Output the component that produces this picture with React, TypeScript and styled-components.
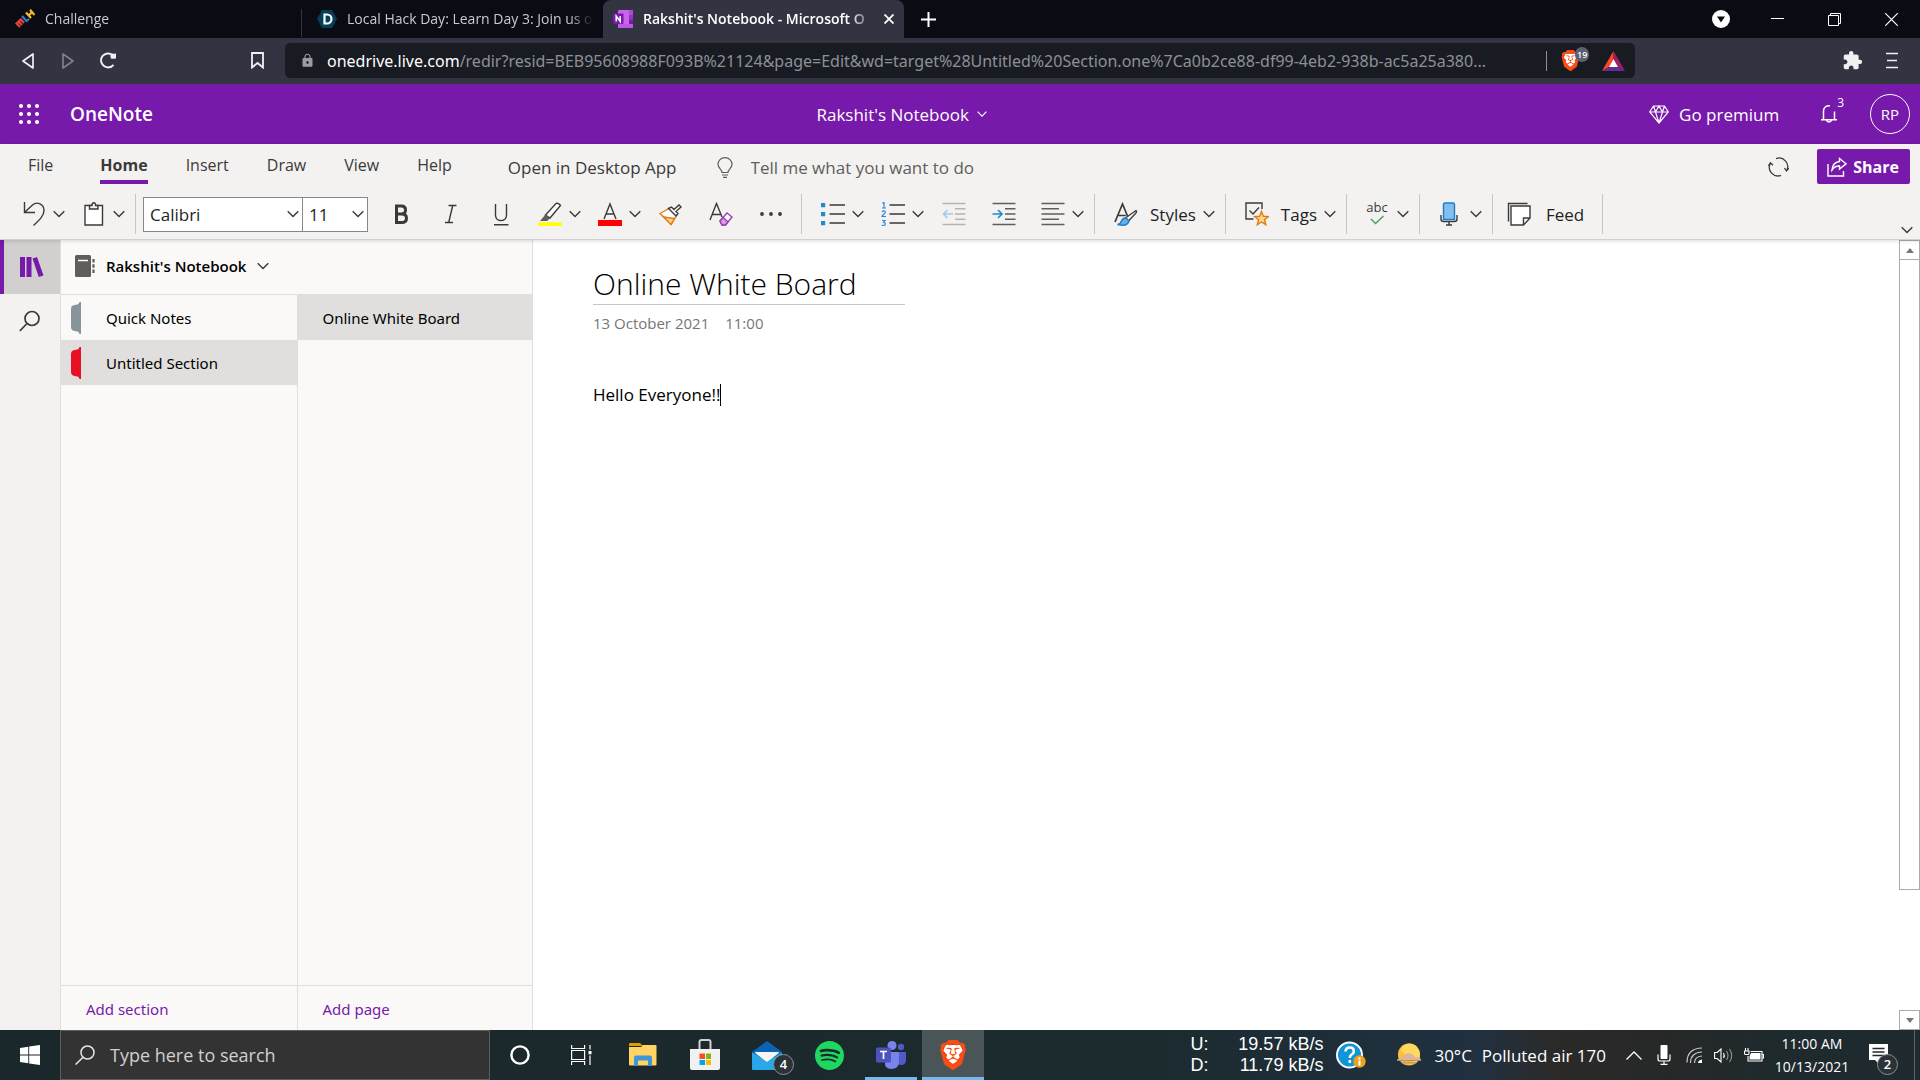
import React from "react";
import styled, { createGlobalStyle, css } from "styled-components";
import { MdExtension, MdLock } from "react-icons/md";
import { SiBrave, SiSpotify } from "react-icons/si";

const ui = `"Open Sans", "Noto Sans", sans-serif`;
const purple = "#7719aa";
const ink = "#3b3a39";

const GlobalStyle = createGlobalStyle`
  *, *::before, *::after { box-sizing: border-box; }
  html, body { margin: 0; }
  body { font-family: ${ui}; font-size: 17px; color: #201f1e; background: #fff; }
  button, input, select { font: inherit; color: inherit; margin: 0; padding: 0; border: 0; background: none; border-radius: 0; }
  button { cursor: pointer; white-space: nowrap; }
  input:focus, [contenteditable]:focus { outline: none; }
  svg { display: block; flex: none; }
  h1, h2, p { margin: 0; font-weight: 400; }
`;

const Page = styled.div`
  display: flex;
  flex-direction: column;
  min-height: 100vh;
`;

/* ---------- browser window ---------- */

const TabStrip = styled.div`
  display: flex;
  height: 38px;
  background: #0b0b14;
  color: #c9cacf;
`;

const BrowserTab = styled.div<{ $active?: boolean }>`
  display: flex;
  align-items: center;
  gap: 10px;
  width: 301px;
  padding: 0 10px 1px;
  font-size: 14px;
  ${(p) =>
    p.$active
      ? css`
          background: #323442;
          color: #fff;
          font-weight: 600;
          border-radius: 8px 8px 0 0;
        `
      : css`
          padding-left: 15px;
        `}
`;

const TabDivider = styled.div`
  width: 1px;
  height: 28px;
  margin-top: 9px;
  background: #33343d;
`;

const TabLabel = styled.span`
  flex: 1;
  min-width: 0;
  white-space: nowrap;
  mask-image: linear-gradient(90deg, #000 calc(100% - 24px), transparent);
`;

const NewTab = styled.button`
  display: grid;
  place-items: center;
  width: 48px;
  color: #fff;
`;

const WindowButtons = styled.div`
  display: flex;
  margin-left: auto;
`;

const WindowButton = styled.button`
  display: grid;
  place-items: center;
  width: 57px;
  color: #fff;
`;

const AddressRow = styled.div`
  display: flex;
  align-items: center;
  height: 46px;
  padding: 0 8px 1px;
  background: #323442;
  color: #f1f1f3;
`;

const NavButton = styled.button<{ $dim?: boolean }>`
  display: grid;
  place-items: center;
  width: 40px;
  height: 34px;
  opacity: ${(p) => (p.$dim ? 0.4 : 1)};
`;

const BookmarkButton = styled(NavButton)`
  margin: 0 8px 0 109px;
`;

const UrlBox = styled.div`
  display: flex;
  align-items: center;
  flex: 1;
  min-width: 0;
  max-width: 1350px;
  height: 35px;
  padding: 0 10px 0 15px;
  border-radius: 5px;
  background: #191b22;
  color: #8d9098;
`;

const Url = styled.div`
  flex: 1;
  min-width: 0;
  margin-left: 12px;
  overflow: hidden;
  white-space: nowrap;
  font-family: "Noto Sans", sans-serif;
  font-size: 16px;
  line-height: 24px;
  b {
    color: #fff;
    font-weight: 400;
  }
`;

const UrlRule = styled.span`
  width: 1px;
  height: 20px;
  margin: 0 13px 0 8px;
  background: #8d9098;
`;

const Shield = styled.button`
  position: relative;
  display: grid;
  width: 30px;
  margin-right: 12px;
`;

const ShieldCount = styled.span`
  position: absolute;
  left: 15px;
  top: -3px;
  padding: 0 2px;
  border-radius: 8px;
  background: #5d6070;
  color: #fff;
  font-size: 9px;
  font-weight: 600;
  line-height: 15px;
`;

const BrowserTools = styled.div`
  display: flex;
  margin-left: auto;
`;

/* ---------- OneNote header ---------- */

const AppHeader = styled.header`
  display: grid;
  grid-template-columns: minmax(0, 7fr) auto minmax(0, 8fr);
  align-items: center;
  height: 60px;
  background: ${purple};
  color: #fff;
`;

const HeaderSide = styled.div<{ $end?: boolean }>`
  display: flex;
  align-items: center;
  justify-content: ${(p) => (p.$end ? "flex-end" : "flex-start")};
  padding: 0 10px 0 18px;
`;

const Brand = styled.span`
  margin-left: 30px;
  font-size: 19px;
  font-weight: 600;
`;

const HeaderButton = styled.button`
  display: flex;
  align-items: center;
  gap: 8px;
`;

const Premium = styled(HeaderButton)`
  gap: 10px;
  margin-right: 42px;
`;

const Bell = styled(HeaderButton)`
  align-items: flex-start;
  gap: 0;
  margin-right: 26px;
  padding-bottom: 8px;
  font-size: 12px;
  line-height: 10px;
  svg {
    margin-top: 7px;
  }
`;

const Avatar = styled.button`
  width: 40px;
  height: 40px;
  border: 1px solid #fff;
  border-radius: 50%;
  font-size: 15px;
`;

/* ---------- ribbon ---------- */

const Ribbon = styled.div`
  position: relative;
  background: #f3f2f1;
  border-bottom: 1px solid #d2d0ce;
  box-shadow: 0 1px 4px rgba(0, 0, 0, 0.14);
`;

const MenuRow = styled.div`
  display: flex;
  height: 40px;
  padding: 0 10px 0 9px;
  color: ${ink};
`;

const MenuTab = styled.button<{ $current?: boolean }>`
  padding: 5px 19px 0;
  font-size: 16px;
  &:first-child {
    margin-right: 9px;
  }
  span {
    display: block;
    height: 34px;
    line-height: 30px;
    border-bottom: 4px solid ${(p) => (p.$current ? purple : "transparent")};
    font-weight: ${(p) => (p.$current ? 700 : 400)};
  }
`;

const OpenDesktop = styled.button`
  margin: 7px 40px 0 37px;
`;

const TellMe = styled.label`
  display: flex;
  align-items: center;
  gap: 18px;
  margin-top: 7px;
  input {
    width: 320px;
  }
  input::placeholder {
    color: #605e5c;
    opacity: 1;
  }
`;

const MenuEnd = styled.div`
  display: flex;
  align-items: center;
  gap: 28px;
  margin: 5px 0 0 auto;
`;

const ShareButton = styled.button`
  display: flex;
  align-items: center;
  gap: 6px;
  height: 35px;
  padding: 0 11px 0 10px;
  border-radius: 2px;
  background: ${purple};
  color: #fff;
  font-size: 16px;
  font-weight: 700;
`;

const ToolRow = styled.div`
  display: flex;
  align-items: center;
  height: 55px;
  padding: 5px 7px 0 3px;
`;

const ToolGroup = styled.div`
  display: flex;
  align-items: center;
  height: 40px;
  padding: 0 5px 0 7px;
  border-right: 1px solid #c8c6c4;
`;

const Tool = styled.button`
  display: flex;
  align-items: center;
  justify-content: center;
  width: 50px;
  height: 40px;
`;

const DropTool = styled.button`
  display: flex;
  align-items: center;
  gap: 7px;
  height: 40px;
  padding: 0 5px 0 12px;
`;

const ToolLabel = styled.span`
  margin-left: 5px;
`;

const FeedTool = styled(DropTool)`
  gap: 10px;
  padding: 0 13px 0 7px;
`;

const SelectBox = styled.label<{ $width: number }>`
  display: grid;
  align-items: center;
  width: ${(p) => p.$width}px;
  height: 35px;
  border: 1px solid #8a8886;
  background: #fff;
  & + & {
    border-left: 0;
    margin-right: 8px;
  }
  select,
  svg {
    grid-area: 1 / 1;
  }
  select {
    appearance: none;
    width: 100%;
    height: 33px;
    padding-left: 6px;
  }
  svg {
    justify-self: end;
    margin-right: 3px;
    pointer-events: none;
  }
`;

const CollapseRibbon = styled.button`
  align-self: flex-end;
  margin: 0 0 5px auto;
`;

/* ---------- workspace ---------- */

const Workspace = styled.main`
  display: flex;
  flex: 1;
`;

const Rail = styled.nav`
  display: flex;
  flex-direction: column;
  width: 61px;
  background: #f3f2f1;
  border-right: 1px solid #e1dfdd;
`;

const RailButton = styled.button<{ $current?: boolean }>`
  display: grid;
  place-items: center;
  height: 54px;
  border-left: ${(p) => (p.$current ? `4px solid ${purple}` : "0")};
  background: ${(p) => (p.$current ? "#d2d0ce" : "transparent")};
`;

const Navigator = styled.aside`
  display: flex;
  flex-direction: column;
  width: 472px;
  background: #faf9f8;
  border-right: 1px solid #e1dfdd;
  font-family: "Noto Sans", sans-serif;
  font-size: 15px;
  color: #000;
`;

const NotebookButton = styled.button`
  display: flex;
  align-items: center;
  gap: 11px;
  height: 54px;
  padding: 0 0 2px 14px;
  font-family: ${ui};
  font-weight: 600;
`;

const Columns = styled.div`
  display: grid;
  grid-template-columns: 1fr 1fr;
  flex: 1;
`;

const Column = styled.div`
  display: flex;
  flex-direction: column;
  & + & {
    border-left: 1px solid #e1dfdd;
  }
`;

const Entry = styled.button<{ $selected?: boolean; $inset?: boolean }>`
  display: flex;
  align-items: center;
  gap: 25px;
  height: 45px;
  padding-left: ${(p) => (p.$inset ? 25 : 10)}px;
  background: ${(p) => (p.$selected ? "#e1dfdd" : "transparent")};
`;

const EntryList = styled.div`
  display: flex;
  flex-direction: column;
  flex: 1;
  border-top: 1px solid #e1dfdd;
`;

const AddButton = styled.button`
  height: 45px;
  padding: 2px 0 0 25px;
  border-top: 1px solid #e1dfdd;
  color: ${purple};
  text-align: left;
`;

const Canvas = styled.article`
  flex: 1;
  min-width: 0;
  padding: 22px 60px;
`;

const NoteTitle = styled.h1`
  width: 312px;
  height: 43px;
  border-bottom: 1px solid #c8c6c4;
  font-size: 30px;
  font-weight: 300;
  line-height: 44px;
  color: #000;
  white-space: nowrap;
`;

const NoteMeta = styled.p`
  display: flex;
  gap: 16px;
  margin-top: 6px;
  font-size: 15px;
  line-height: 24px;
  color: #767676;
`;

const NoteBody = styled.p`
  display: flex;
  align-items: center;
  margin-top: 48px;
  line-height: 24px;
  color: #000;
`;

const Caret = styled.span`
  width: 1px;
  height: 22px;
  background: #000;
`;

const ScrollTrack = styled.div`
  display: flex;
  flex-direction: column;
  width: 21px;
`;

const ScrollButton = styled.button`
  display: grid;
  place-items: center;
  height: 20px;
  border: 1px solid #ababab;
`;

const ScrollRun = styled.div`
  flex: 1;
`;

const ScrollThumb = styled.div`
  height: 84%;
  border: 1px solid #ababab;
  border-top: 0;
`;

/* ---------- Windows taskbar ---------- */

const Taskbar = styled.footer`
  display: flex;
  height: 50px;
  background: linear-gradient(90deg, #1a272b 0%, #1c2b2e 60%, #1e2e3a 70%, #21303f 77%, #2b2a29 81%, #262828 87%, #1e2a2d 93%, #1e2a2d 100%);
  color: #fff;
`;

const TaskButton = styled.button<{ $width: number; $state?: "running" | "focused" }>`
  position: relative;
  display: grid;
  place-items: center;
  width: ${(p) => p.$width}px;
  height: 50px;
  background: ${(p) => (p.$state === "focused" ? "#4a5557" : "transparent")};
  &::after {
    content: "";
    position: absolute;
    bottom: 0;
    left: ${(p) => (p.$state === "focused" ? 0 : 5)}px;
    right: ${(p) => (p.$state === "focused" ? 0 : 5)}px;
    height: 3px;
    background: ${(p) => (p.$state ? "#76b9ed" : "transparent")};
  }
`;

const SearchBox = styled.label`
  display: flex;
  align-items: center;
  gap: 15px;
  width: 430px;
  padding-left: 14px;
  border: 1px solid #5b5d5e;
  background: #333;
  font-size: 18px;
  input {
    flex: 1;
    min-width: 0;
  }
  input::placeholder {
    color: #d0d0d0;
    opacity: 1;
  }
`;

const CountBadge = styled.span`
  position: absolute;
  right: 4px;
  bottom: 5px;
  width: 21px;
  height: 21px;
  border: 1px solid #8b8f90;
  border-radius: 50%;
  background: #2b3336;
  font-size: 13px;
  font-weight: 600;
  line-height: 19px;
  text-align: center;
`;

const Tray = styled.div`
  display: flex;
  align-items: center;
  margin-left: auto;
`;

const NetMeter = styled.div`
  display: grid;
  grid-template-columns: auto auto;
  justify-content: space-between;
  width: 133px;
  margin-right: 13px;
  font-family: "Liberation Sans", Arial, sans-serif;
  font-size: 18px;
  line-height: 21px;
  span:nth-child(even) {
    text-align: right;
  }
`;

const Weather = styled.button`
  display: flex;
  align-items: center;
  gap: 12px;
  margin-left: 30px;
  padding-right: 13px;
`;

const WeatherText = styled.span`
  display: flex;
  gap: 10px;
`;

const TrayButton = styled.button`
  display: grid;
  place-items: center;
  width: 30px;
  height: 50px;
`;

const Clock = styled.button`
  width: 86px;
  font-size: 14px;
  line-height: 23px;
  text-align: center;
  span {
    display: block;
  }
`;

const DesktopEdge = styled.div`
  width: 6px;
  height: 50px;
  margin-left: 12px;
  border-left: 1px solid #5b6466;
`;

/* ---------- drawings ---------- */

const Chevron = ({ color = ink, width = 12 }: { color?: string; width?: number }) => (
  <svg width={width} height="8" viewBox="0 0 12 8" fill="none" stroke={color} strokeWidth="1.4">
    <path d="M.7 1.2 6 6.5l5.300-5.300" />
  </svg>
);

const Glyph = ({ children, size = 24, color = ink }: { children: React.ReactNode; size?: number; color?: string }) => (
  <svg width={size} height={size} viewBox="0 0 24 24" fill="none" stroke={color} strokeWidth="1.4">
    {children}
  </svg>
);

const MlhLogo = () => (
  <svg width="20" height="20" viewBox="0 0 20 20" fill="none" strokeWidth="2.200">
    <path d="M5 18 1.500 14.500l2-2 3.500 3.500M4 12l2-1.500 3 3.500" stroke="#e5443a" />
    <path d="M7 7l4.500 5 2.500-2" stroke="#2f7fd0" />
    <path d="M11 3.500 16 9M15 .8 19.500 6M13.500 6.500 17 3.200" stroke="#f6c02d" />
  </svg>
);

const DevpostLogo = () => (
  <svg width="20" height="20" viewBox="0 0 20 20">
    <path d="M5 1h10l5 9-5 9H5L0 10z" fill="#053f56" />
    <path d="M7.500 5.500H10a4.500 4.500 0 0 1 0 9H7.500z" fill="none" stroke="#fff" strokeWidth="2.200" />
  </svg>
);

const OneNoteLogo = () => (
  <svg width="20" height="20" viewBox="0 0 20 20">
    <rect x="5" y="1" width="15" height="18" rx="1" fill="#ca64ea" />
    <path d="M16 1h3a1 1 0 0 1 1 1v4h-4z" fill="#ae4bd5" />
    <path d="M16 6h4v4.500h-4z" fill="#9332bf" />
    <path d="M16 10.500h4V15h-4z" fill="#7719aa" />
    <path d="M5 15h15v3a1 1 0 0 1-1 1H6a1 1 0 0 1-1-1z" fill="#c057e3" />
    <rect x="0" y="4.500" width="10.500" height="10.500" rx="1" fill="#7719aa" />
    <path d="M3.200 12.500v-5.500l4 5.500V7" fill="none" stroke="#fff" strokeWidth="1.500" />
  </svg>
);

const BraveShield = ({ size }: { size: number }) => (
  <svg width={size} height={size} viewBox="0 0 24 24">
    <path d="M6 4h12l2 5-3.500 9-4.500 4-4.500-4L4 9z" fill="#fff" />
    <SiBrave size={24} color="#fb4b14" />
  </svg>
);

const BatTriangle = () => (
  <svg width="23" height="20" viewBox="0 0 23 20">
    <path d="M11.500 0 0 20l7-4 4.500-8z" fill="#ff4724" />
    <path d="M11.500 0 23 20l-7-4-4.500-8z" fill="#9e1f63" />
    <path d="M0 20h23l-7-4H7z" fill="#662d91" />
    <path d="M11.500 8 7 16h9z" fill="#fff" />
  </svg>
);

const Waffle = () => (
  <svg width="22" height="22" viewBox="0 0 22 22" fill="#fff">
    {[3, 11, 19].map((y) => [3, 11, 19].map((x) => <circle key={`${x}-${y}`} cx={x} cy={y} r="2.100" />))}
  </svg>
);

const BrushIcon = () => (
  <Glyph>
    <path d="M1 11.500 11 6l7 6.500-5.500 9.500z" fill="#fff" stroke="#e07b1a" />
    <path d="M4.500 15l11 1.500-3.500 6z" fill="#fbd08b" stroke="#e07b1a" />
    <path d="M9.500 6.500l3-1.500 2.500 2.500 5-4.500 2 2-5 4.500 2 2-2 2.500z" fill="#fff" />
  </Glyph>
);

const StarIcon = () => (
  <Glyph>
    <path d="M8.500 17H1V1h16v6" fill="none" />
    <path d="M4.500 8.500 8 12l6-6.500" />
    <path d="m16.500 9.500 1.900 4.800 5 .3-3.900 3.200 1.300 4.900-4.300-2.700-4.200 2.700 1.300-4.900-3.900-3.200 5-.3z" fill="#fcd78b" stroke="#e07b1a" />
  </Glyph>
);

const ListLines = ({ numbered }: { numbered?: boolean }) => (
  <Glyph>
    <path d="M8.500 3H24M8.500 12H24M8.500 21H24" />
    {numbered ? (
      <g stroke="#2b88d8" strokeWidth="1.200">
        <path d="M1.300 1.200 3 .4V6M1 6h4" />
        <path d="M1 10c.5-1.500 3.500-1.500 3.300.3C4.200 12 1 13 1 14.500h4" />
        <path d="M1 18.500h3l-1.500 2c2.500 0 2.500 3 0 3-.8 0-1.300-.3-1.700-.7" />
      </g>
    ) : (
      <path d="M0 1h4.200v4.200H0zM0 10h4.200v4.200H0zM0 19h4.200v4.200H0z" fill="#1e8bcd" stroke="none" />
    )}
  </Glyph>
);

const IndentIcon = ({ outward }: { outward?: boolean }) => (
  <Glyph color={outward ? "#b6b4b2" : "#605e5c"}>
    <path d="M.5 1.500h23M13 6.700h10.500M13 12h10.500M13 17.200h10.500M.5 22.500h23" />
    <path
      d={outward ? "M11 12H1.500M5.500 8l-4 4 4 4" : "M.5 12H10M6 8l4 4-4 4"}
      stroke={outward ? "#9dcbec" : "#1e8bcd"}
      strokeWidth="1.700"
    />
  </Glyph>
);

const NotebookIcon = () => (
  <svg width="20" height="22" viewBox="0 0 20 22">
    <path d="M0 1.500A1.500 1.500 0 0 1 1.500 0h13A1.500 1.500 0 0 1 16 1.500v19a1.500 1.500 0 0 1-1.500 1.500h-13A1.500 1.500 0 0 1 0 20.500z" fill="#605e5c" />
    <path d="M3 5.500h10" stroke="#fff" strokeWidth="1.500" />
    <path d="M18.500 4v3.500M18.500 9.300v3.500M18.500 14.500V18" stroke="#605e5c" strokeWidth="2.200" />
  </svg>
);

const SectionMark = ({ color }: { color: string }) => (
  <svg width="10" height="32" viewBox="0 0 10 32">
    <path d="M10 0H8.500Q7.800 2.200 6.500 2.400L3.500 2.900Q0 3.500 0 7v18q0 3.500 3.500 4.100l3 .5q1.300.2 2 2.400H10z" fill={color} />
  </svg>
);

const FolderIcon = () => (
  <svg width="28" height="24" viewBox="0 0 28 24">
    <path d="M0 1q0-1 1-1h10l3 3H0z" fill="#e09c00" />
    <path d="M0 4h12l2-2h12.500q1 0 1 1v18.500q0 1-1 1h-25.500q-1 0-1-1z" fill="#ffd463" />
    <path d="M5 14.500q0-2 2-2h14q2 0 2 2V23h-4v-5.500H9V23H5z" fill="#3f95d6" />
  </svg>
);

const StoreIcon = () => (
  <svg width="30" height="32" viewBox="0 0 30 32">
    <path d="M9.500 10V3q0-2 2-2h7q2 0 2 2v7" fill="none" stroke="#d0d2d3" strokeWidth="2" />
    <path d="M0 10h30v19q0 2-2 2H2q-2 0-2-2z" fill="#f1f1f1" />
    <path d="M9.500 14.500H15V20H9.500z" fill="#f25022" />
    <path d="M16 14.500h5V20h-5z" fill="#7fba00" />
    <path d="M9.500 21H15v5H9.500z" fill="#00a4ef" />
    <path d="M16 21h5v5h-5z" fill="#ffb900" />
  </svg>
);

const MailIcon = () => (
  <svg width="30" height="29" viewBox="0 0 30 29">
    <path d="M0 11 15 0l15 11v4H0z" fill="#0a63b5" />
    <path d="M3 11h24L15 22z" fill="#f5f5f5" />
    <path d="M0 11.500 15 20l15-8.500V28q0 1-1 1H1q-1 0-1-1z" fill="#28a8ea" />
    <path d="M2.500 11.500h25L15 21z" fill="#f5f5f5" />
  </svg>
);

const TeamsIcon = () => (
  <svg width="30" height="28" viewBox="0 0 30 28">
    <circle cx="25" cy="6" r="3.200" fill="#5059c9" />
    <circle cx="16" cy="4.500" r="4.500" fill="#7b83eb" />
    <path d="M20 11h9q1 0 1 1v7q0 5-5 5-4 0-5-4z" fill="#5059c9" />
    <path d="M9 11h13q1 0 1 1v8q0 8-7.500 8T9 20z" fill="#7b83eb" />
    <rect x="0" y="6.500" width="15" height="15" rx="1.500" fill="#4b53bc" />
    <path d="M4 10.500h7M7.500 10.500V18" stroke="#fff" strokeWidth="1.700" />
  </svg>
);

const WeatherIcon = () => (
  <svg width="26" height="24" viewBox="0 0 28 26">
    <circle cx="14" cy="12.500" r="12" fill="#fbbd3c" />
    <path d="M14 .5a12 12 0 0 1 7 21.500L5 8Q8 .5 14 .5z" fill="#ffd65e" />
    <path d="M1 19q0-2 4-2.500 2-.5 3-1Q9 11 13.500 11q5 0 6.500 4.500h3q4 .5 4 3.500z" fill="#dcb59b" />
    <path d="M1 19h26M6 21.500h16" stroke="#a58a78" />
  </svg>
);

const HelpIcon = () => (
  <svg width="30" height="28" viewBox="0 0 30 28">
    <circle cx="13.500" cy="14" r="12.500" fill="#1295d8" stroke="#fff" strokeWidth="2" />
    <path d="M9.500 10.500q.3-4 4.300-4t4 3.700q0 2-2.200 3.300-1.800 1.200-1.800 3.500M13.800 19v3" fill="none" stroke="#fff" strokeWidth="2.600" />
    <circle cx="23.500" cy="20.500" r="6.200" fill="#eaa221" />
    <path d="M23.500 16.500v2M23.500 19.500v5" stroke="#fff" strokeWidth="2" />
  </svg>
);

/* ---------- page ---------- */

const menuTabs = ["File", "Home", "Insert", "Draw", "View", "Help"];

export default function App() {
  return (
    <>
      <GlobalStyle />
      <Page>
        <TabStrip>
          <BrowserTab>
            <MlhLogo />
            <TabLabel>Challenge</TabLabel>
          </BrowserTab>
          <TabDivider />
          <BrowserTab>
            <DevpostLogo />
            <TabLabel>Local Hack Day: Learn Day 3: Join us o</TabLabel>
          </BrowserTab>
          <BrowserTab $active>
            <OneNoteLogo />
            <TabLabel>Rakshit's Notebook - Microsoft O</TabLabel>
            <button aria-label="Close tab">
              <svg width="10" height="10" viewBox="0 0 10 10" stroke="#fff" strokeWidth="1.800">
                <path d="M.5.5l9 9M9.500.5l-9 9" />
              </svg>
            </button>
          </BrowserTab>
          <NewTab aria-label="New tab">
            <svg width="15" height="15" viewBox="0 0 15 15" stroke="#fff" strokeWidth="2">
              <path d="M7.500 0v15M0 7.500h15" />
            </svg>
          </NewTab>
          <WindowButtons>
            <WindowButton aria-label="Search tabs">
              <svg width="18" height="18" viewBox="0 0 18 18">
                <circle cx="9" cy="9" r="9" fill="#fff" />
                <path d="M5 6.500h8L9 12.500z" fill="#0b0b14" />
              </svg>
            </WindowButton>
            <WindowButton aria-label="Minimize">
              <svg width="13" height="2" viewBox="0 0 13 2">
                <path d="M0 .5h13" stroke="#fff" />
              </svg>
            </WindowButton>
            <WindowButton aria-label="Restore">
              <svg width="13" height="13" viewBox="0 0 13 13" fill="none" stroke="#fff">
                <path d="M.5 2.500h10v10H.5zM2.500 2.500v-2h10v10h-2" />
              </svg>
            </WindowButton>
            <WindowButton aria-label="Close">
              <svg width="13" height="13" viewBox="0 0 13 13" stroke="#fff" strokeWidth="1.200">
                <path d="M.3.3l12.400 12.400M12.700.3.3 12.700" />
              </svg>
            </WindowButton>
          </WindowButtons>
        </TabStrip>

        <AddressRow>
          <NavButton aria-label="Back">
            <svg width="12" height="16" viewBox="0 0 12 16" fill="none" stroke="currentColor" strokeWidth="1.700" strokeLinejoin="round">
              <path d="M11 1v14L1 8z" />
            </svg>
          </NavButton>
          <NavButton $dim aria-label="Forward">
            <svg width="12" height="16" viewBox="0 0 12 16" fill="none" stroke="currentColor" strokeWidth="1.700" strokeLinejoin="round">
              <path d="M1 1v14l10-7z" />
            </svg>
          </NavButton>
          <NavButton aria-label="Reload">
            <svg width="18" height="17" viewBox="0 0 18 17" fill="none" stroke="currentColor" strokeWidth="2">
              <path d="M14.500 12.800A7 7 0 1 1 13.500 3" />
              <path d="M17 1v5.500h-5.500z" fill="currentColor" stroke="none" />
              <circle cx="14" cy="4" r="2.600" fill="currentColor" stroke="none" />
            </svg>
          </NavButton>
          <BookmarkButton aria-label="Bookmark">
            <svg width="13" height="17" viewBox="0 0 13 17" fill="none" stroke="currentColor" strokeWidth="1.800">
              <path d="M1 1h11v14.500L6.500 11 1 15.500z" />
            </svg>
          </BookmarkButton>
          <UrlBox>
            <MdLock size={15} color="#9a9ca5" />
            <Url role="textbox" aria-label="Address" contentEditable suppressContentEditableWarning>
              <b>onedrive.live.com</b>
              /redir?resid=BEB95608988F093B%21124&amp;page=Edit&amp;wd=target%28Untitled%20Section.one%7Ca0b2ce88-df99-4eb2-938b-ac5a25a380...
            </Url>
            <UrlRule />
            <Shield aria-label="Brave Shields">
              <BraveShield size={21} />
              <ShieldCount>19</ShieldCount>
            </Shield>
            <button aria-label="Rewards">
              <BatTriangle />
            </button>
          </UrlBox>
          <BrowserTools>
            <NavButton aria-label="Extensions">
              <MdExtension size={21} />
            </NavButton>
            <NavButton aria-label="Menu">
              <svg width="12" height="17" viewBox="0 0 12 17" stroke="currentColor" strokeWidth="1.700">
                <path d="M0 1.500h12M1 8.500h10M0 15.500h12" />
              </svg>
            </NavButton>
          </BrowserTools>
        </AddressRow>

        <AppHeader>
          <HeaderSide>
            <button aria-label="App launcher">
              <Waffle />
            </button>
            <Brand>OneNote</Brand>
          </HeaderSide>
          <HeaderButton>
            Rakshit's Notebook
            <Chevron color="#fff" width={10} />
          </HeaderButton>
          <HeaderSide $end>
            <Premium>
              <svg width="20" height="19" viewBox="0 0 20 19" fill="none" stroke="#fff" strokeWidth="1.200">
                <path d="M4.500 1h11L19.300 7 10 18 .7 7zM.7 7h18.600M4.500 1 6.500 7 10 18l3.500-11 2-6M6.500 7 10 1l3.500 6" />
              </svg>
              Go premium
            </Premium>
            <Bell aria-label="3 notifications">
              <svg width="16" height="18" viewBox="0 0 16 18" fill="none" stroke="#fff" strokeWidth="1.500">
                <path d="M9 .8C5 .5 2.500 2.500 2.500 6v8.500M0 14.800h16M13.500 6.500v8M5.500 15.500q2.500 3 5 0" />
              </svg>
              3
            </Bell>
            <Avatar>RP</Avatar>
          </HeaderSide>
        </AppHeader>

        <Ribbon>
          <MenuRow>
            {menuTabs.map((t) => (
              <MenuTab key={t} $current={t === "Home"}>
                <span>{t}</span>
              </MenuTab>
            ))}
            <OpenDesktop>Open in Desktop App</OpenDesktop>
            <TellMe>
              <svg width="16" height="21" viewBox="0 0 16 21" fill="none" stroke="#605e5c" strokeWidth="1.200">
                <path d="M5 15.500C5 12 1 11.500 1 7.300 1 3.500 4 .7 8 .7s7 2.800 7 6.600c0 4.200-4 4.700-4 8.200zM5 18h6M6 20.300h4" />
              </svg>
              <input aria-label="Tell me what you want to do" placeholder="Tell me what you want to do" />
            </TellMe>
            <MenuEnd>
              <button aria-label="Sync">
                <svg width="21" height="20" viewBox="0 0 21 20" fill="none" stroke={ink} strokeWidth="1.300">
                  <path d="M8 1.600a8.600 8.600 0 0 1 10.800 11.800M16.500 11l2 3 2.300-2.800M13 18.300A8.600 8.600 0 0 1 2.200 6.500M.4 8.800l2-3 2.500 2.500" />
                </svg>
              </button>
              <ShareButton>
                <svg width="20" height="20" viewBox="0 0 20 20" fill="none" stroke="#fff" strokeWidth="1.400">
                  <path d="M1 7v12h15.500v-5M12.500 1.500l6.500 5.300-6.500 5.200V9Q8 8.500 5 13q.5-7.500 7.500-8.500z" />
                </svg>
                Share
              </ShareButton>
            </MenuEnd>
          </MenuRow>

          <ToolRow>
            <ToolGroup>
              <DropTool aria-label="Undo">
                <Glyph>
                  <path d="M2.500 0v10.500H13M3 10 10.500 3C15-1 22 2 22 8.500c0 5-4 9-10.500 15" />
                </Glyph>
                <Chevron />
              </DropTool>
              <DropTool aria-label="Paste">
                <Glyph>
                  <path d="M3 3.500h17.500V23H3z" fill="#fff" />
                  <path d="M7.500 7V3.500H10Q10 .7 11.800.7T13.600 3.500H16V7z" fill="#f3f2f1" />
                </Glyph>
                <Chevron />
              </DropTool>
            </ToolGroup>
            <ToolGroup>
              <SelectBox $width={160}>
                <select aria-label="Font" defaultValue="Calibri">
                  <option>Calibri</option>
                </select>
                <Chevron />
              </SelectBox>
              <SelectBox $width={65}>
                <select aria-label="Font size" defaultValue="11">
                  <option>11</option>
                </select>
                <Chevron />
              </SelectBox>
              <Tool aria-label="Bold">
                <Glyph>
                  <path d="M7.500 4v16.500h5.300c3 0 4.700-1.700 4.700-4.300s-1.800-4.200-4.600-4.200H7.500h5c2.500 0 4-1.500 4-4s-1.500-4-4-4z" strokeWidth="3" />
                </Glyph>
              </Tool>
              <Tool aria-label="Italic">
                <Glyph>
                  <path d="M9.500 3.500h8M6 20.500h8M13.700 3.500l-4 17" />
                </Glyph>
              </Tool>
              <Tool aria-label="Underline">
                <Glyph>
                  <path d="M6.500 2v11c0 7.500 11 7.500 11 0V2M5 22.700h14.500" />
                </Glyph>
              </Tool>
              <DropTool aria-label="Highlight">
                <Glyph>
                  <path d="M7.500 13 18 1.500q2.500-1 4.500 2L12 16z" fill="#fff" />
                  <path d="M7.500 12.500 12 16.500 9 19H2z" fill="#605e5c" stroke="none" />
                  <path d="M0 22.200h24" stroke="#ff0" strokeWidth="3.600" />
                </Glyph>
                <Chevron />
              </DropTool>
              <DropTool aria-label="Font colour">
                <Glyph>
                  <path d="M6 17 12 2l6 15M8 12h8" />
                  <path d="M0 21h24" stroke="#f00" strokeWidth="6" />
                </Glyph>
                <Chevron />
              </DropTool>
              <Tool aria-label="Format painter">
                <BrushIcon />
              </Tool>
              <Tool aria-label="Clear formatting">
                <Glyph>
                  <path d="M1 18 7.500 1.500 13 15M3.500 12.500h8.500" />
                  <path d="M11 19l7-8 5 4-6.500 8h-3.500z" fill="#fff" stroke="#9b3fb5" />
                  <path d="M11 19l3-3.500 5 4.300-2.500 3.200h-3.500z" fill="#d59be0" stroke="#9b3fb5" />
                </Glyph>
              </Tool>
              <Tool aria-label="More">
                <svg width="24" height="4" viewBox="0 0 24 4" fill={ink}>
                  <circle cx="3" cy="2" r="1.900" />
                  <circle cx="12" cy="2" r="1.900" />
                  <circle cx="21" cy="2" r="1.900" />
                </svg>
              </Tool>
            </ToolGroup>
            <ToolGroup>
              <DropTool aria-label="Bullets">
                <ListLines />
                <Chevron />
              </DropTool>
              <DropTool aria-label="Numbering">
                <ListLines numbered />
                <Chevron />
              </DropTool>
              <Tool aria-label="Decrease indent">
                <IndentIcon outward />
              </Tool>
              <Tool aria-label="Increase indent">
                <IndentIcon />
              </Tool>
              <DropTool aria-label="Alignment">
                <Glyph color="#605e5c">
                  <path d="M.5 1.500h23M.5 6.700h17.500M.5 12h23M.5 17.200h17.500M.5 22.500h23" />
                </Glyph>
                <Chevron />
              </DropTool>
            </ToolGroup>
            <ToolGroup>
              <DropTool>
                <Glyph>
                  <path d="M1 20 8.500 2l5 12M3.800 13.500h8" strokeWidth="1.700" />
                  <path d="M11.500 16 22 8.500q1.500 1-1 3.500l-6.500 7z" fill="#fff" />
                  <path d="M3.500 22.500q3-.5 4-3.500t4.500-3l3 3q-1.500 6-11.500 3.500z" fill="#69afe5" stroke="#1e7dc8" />
                </Glyph>
                <ToolLabel>Styles</ToolLabel>
                <Chevron />
              </DropTool>
            </ToolGroup>
            <ToolGroup>
              <DropTool>
                <StarIcon />
                <ToolLabel>Tags</ToolLabel>
                <Chevron />
              </DropTool>
            </ToolGroup>
            <ToolGroup>
              <DropTool aria-label="Spelling">
                <Glyph>
                  <text x="11" y="9.500" textAnchor="middle" fontSize="13" fill={ink} stroke="none">
                    abc
                  </text>
                  <path d="M5 17l4.500 4.500L17.500 14" stroke="#3fa35b" />
                </Glyph>
                <Chevron />
              </DropTool>
            </ToolGroup>
            <ToolGroup>
              <DropTool aria-label="Dictate">
                <Glyph>
                  <path d="M2 13v4q0 2.500 2.500 2.500h11Q18 19.500 18 17v-4M10 19.500V23M7 23h6" />
                  <path d="M4.500 2.500q0-1.500 1.500-1.500h8q1.500 0 1.500 1.500v15h-11z" fill="#83beec" stroke="#1e7dc8" />
                </Glyph>
                <Chevron />
              </DropTool>
            </ToolGroup>
            <ToolGroup>
              <FeedTool>
                <Glyph>
                  <path d="M1.500 19.500V1.500h19" />
                  <path d="M4 4h19v12l-6.500 7H4z" fill="#fff" />
                  <path d="M23 16h-6.500v7" />
                </Glyph>
                <ToolLabel>Feed</ToolLabel>
              </FeedTool>
            </ToolGroup>
            <CollapseRibbon aria-label="Collapse ribbon">
              <Chevron />
            </CollapseRibbon>
          </ToolRow>
        </Ribbon>

        <Workspace>
          <Rail>
            <RailButton $current aria-label="Notebooks">
              <svg width="24" height="22" viewBox="0 0 24 22" fill={purple}>
                <path d="M0 1h5v20H0zM6.500 1h5v20h-5zM12.500 2.500l4.500-1.500 6.500 18.500-4.700 1.500z" />
              </svg>
            </RailButton>
            <RailButton aria-label="Search">
              <svg width="22" height="22" viewBox="0 0 22 22" fill="none" stroke={ink} strokeWidth="1.700">
                <circle cx="13" cy="8.500" r="7" />
                <path d="M8 13.500.8 21" />
              </svg>
            </RailButton>
          </Rail>
          <Navigator>
            <NotebookButton>
              <NotebookIcon />
              Rakshit's Notebook
              <Chevron />
            </NotebookButton>
            <Columns>
              <Column>
                <EntryList>
                  <Entry>
                    <SectionMark color="#87959a" />
                    Quick Notes
                  </Entry>
                  <Entry $selected>
                    <SectionMark color="#e81123" />
                    Untitled Section
                  </Entry>
                </EntryList>
                <AddButton>Add section</AddButton>
              </Column>
              <Column>
                <EntryList>
                  <Entry $selected $inset>
                    Online White Board
                  </Entry>
                </EntryList>
                <AddButton>Add page</AddButton>
              </Column>
            </Columns>
          </Navigator>
          <Canvas>
            <NoteTitle>Online White Board</NoteTitle>
            <NoteMeta>
              <span>13 October 2021</span>
              <span>11:00</span>
            </NoteMeta>
            <NoteBody>
              Hello Everyone!!
              <Caret />
            </NoteBody>
          </Canvas>
          <ScrollTrack>
            <ScrollButton aria-label="Scroll up">
              <svg width="8" height="5" viewBox="0 0 8 5">
                <path d="M0 5 4 0l4 5z" fill="#777" />
              </svg>
            </ScrollButton>
            <ScrollRun>
              <ScrollThumb />
            </ScrollRun>
            <ScrollButton aria-label="Scroll down">
              <svg width="8" height="5" viewBox="0 0 8 5">
                <path d="M0 0l4 5 4-5z" fill="#777" />
              </svg>
            </ScrollButton>
          </ScrollTrack>
        </Workspace>

        <Taskbar>
          <TaskButton $width={60} aria-label="Start">
            <svg width="20" height="20" viewBox="0 0 20 20" fill="#fff">
              <path d="M0 3l8.300-1.200v7.700H0zM9.200 1.600 20 0v9.500H9.200zM0 10.500h8.300v7.700L0 17zM9.200 10.500H20V20L9.200 18.400z" />
            </svg>
          </TaskButton>
          <SearchBox>
            <svg width="20" height="20" viewBox="0 0 20 20" fill="none" stroke="#e6e6e6" strokeWidth="1.500">
              <circle cx="12.500" cy="7.500" r="6.500" />
              <path d="M8 12.300.6 19.500" />
            </svg>
            <input aria-label="Search" placeholder="Type here to search" />
          </SearchBox>
          <TaskButton $width={60} aria-label="Cortana">
            <svg width="20" height="20" viewBox="0 0 20 20" fill="none" stroke="#fff" strokeWidth="2.400">
              <circle cx="10" cy="10" r="8.600" />
            </svg>
          </TaskButton>
          <TaskButton $width={62} aria-label="Task view">
            <svg width="21" height="20" viewBox="0 0 21 20" fill="none" stroke="#fff" strokeWidth="1.200">
              <path d="M.6 5.500h13v9H.6zM.6 0v3.500h13V0M.6 20v-3.500h13V20M19 0v4.500M19 10.500V20" />
              <path d="M17.500 6h3v3.300h-3z" fill="#fff" stroke="none" />
            </svg>
          </TaskButton>
          <TaskButton $width={62} aria-label="File Explorer">
            <FolderIcon />
          </TaskButton>
          <TaskButton $width={62} aria-label="Microsoft Store">
            <StoreIcon />
          </TaskButton>
          <TaskButton $width={62} aria-label="Mail">
            <MailIcon />
            <CountBadge>4</CountBadge>
          </TaskButton>
          <TaskButton $width={62} aria-label="Spotify">
            <SiSpotify size={29} color="#1ed760" />
          </TaskButton>
          <TaskButton $width={62} $state="running" aria-label="Microsoft Teams">
            <TeamsIcon />
          </TaskButton>
          <TaskButton $width={62} $state="focused" aria-label="Brave">
            <BraveShield size={30} />
          </TaskButton>

          <Tray>
            <NetMeter>
              <span>U:</span>
              <span>19.57 kB/s</span>
              <span>D:</span>
              <span>11.79 kB/s</span>
            </NetMeter>
            <button aria-label="Help">
              <HelpIcon />
            </button>
            <Weather>
              <WeatherIcon />
              <WeatherText>
                <span>30°C</span>
                <span>Polluted air 170</span>
              </WeatherText>
            </Weather>
            <TrayButton aria-label="Hidden icons">
              <svg width="16" height="9" viewBox="0 0 16 9" fill="none" stroke="#fff" strokeWidth="1.300">
                <path d="M.5 8.500 8 1l7.500 7.500" />
              </svg>
            </TrayButton>
            <TrayButton aria-label="Microphone">
              <svg width="14" height="20" viewBox="0 0 14 20" fill="none" stroke="#fff" strokeWidth="1.200">
                <rect x="3.500" y="0" width="7" height="14" rx="1" fill="#fff" stroke="none" />
                <path d="M1 9.500V14q0 2 2 2h8q2 0 2-2V9.500M7 16v3.400M3.500 19.400h7" />
              </svg>
            </TrayButton>
            <TrayButton aria-label="Wi-Fi">
              <svg width="17" height="17" viewBox="0 0 17 17" fill="none" stroke="#c8cccd" strokeWidth="1.200">
                <path d="M1 15.500Q1 1.500 16 1M4.500 16Q4.500 5.500 16 5M8.500 16q0-6.500 7.500-7" />
                <path d="M12 16q0-3 4-3.500V16z" fill="#fff" stroke="none" />
              </svg>
            </TrayButton>
            <TrayButton aria-label="Volume">
              <svg width="20" height="17" viewBox="0 0 20 17" fill="none" stroke="#fff" strokeWidth="1.100">
                <path d="M.6 5.500h2.600L7 2v13l-3.800-3.500H.6zM9.500 6q1.600 2.500 0 5" />
                <path d="M12.500 4q3 4.500 0 9M15.500 2q4.500 6.500 0 13" stroke="#8f9597" />
              </svg>
            </TrayButton>
            <TrayButton aria-label="Battery">
              <svg width="20" height="15" viewBox="0 0 20 15" fill="none" stroke="#fff" strokeWidth="1.100">
                <path d="M6.500 3.500H18v9.500H4V8M18 6.500h1.500V10H18" />
                <path d="M7 5h9.500v6.500h-11V8.500z" fill="#fff" stroke="none" />
                <path d="M.5 3h4.500v2.500q0 1-1 1H1.500q-1 0-1-1zM1.500 0v3M4 0v3" />
              </svg>
            </TrayButton>
            <Clock>
              <span>11:00 AM</span>
              <span>10/13/2021</span>
            </Clock>
            <TaskButton $width={47} aria-label="Notifications">
              <svg width="22" height="22" viewBox="0 0 22 22">
                <path d="M1 0h19v16h-7v6l-6-6H1z" fill="#fff" />
                <path d="M4.500 4.500h12M4.500 8h12M4.500 11.500h12" stroke="#1e2a2d" strokeWidth="1.400" />
              </svg>
              <CountBadge>2</CountBadge>
            </TaskButton>
            <DesktopEdge />
          </Tray>
        </Taskbar>
      </Page>
    </>
  );
}
